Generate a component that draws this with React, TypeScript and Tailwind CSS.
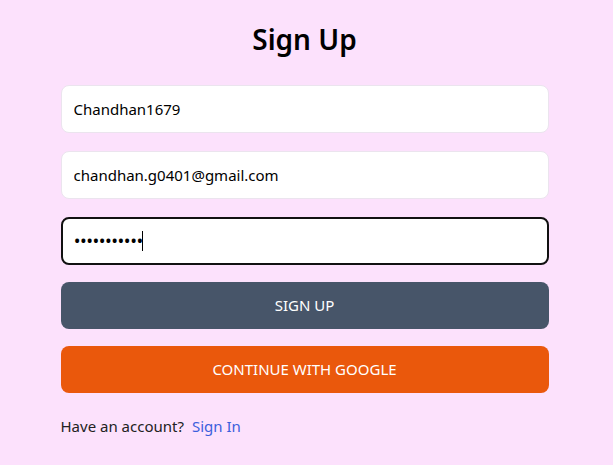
import React, { useState } from 'react';

export default function App() {
  const [form, setForm] = useState({
    username: 'Chandhan1679',
    email: 'chandhan.g0401@gmail.com',
    password: 'chandhan123',
  });

  function handleChange(e: React.ChangeEvent<HTMLInputElement>) {
    setForm({ ...form, [e.target.id]: e.target.value });
  }

  return (
    <div
      className="min-h-screen bg-[#fce1fc] text-black pr-1"
      style={{ fontFamily: '"Segoe UI", "Noto Sans", sans-serif' }}
    >
      <div className="max-w-lg mx-auto px-3 pt-[21px]">
        <h1 className="text-[28px] leading-9 text-center font-semibold mb-7">Sign Up</h1>

        <form className="flex flex-col" onSubmit={(e) => e.preventDefault()}>
          <input
            id="username"
            type="text"
            placeholder="username"
            value={form.username}
            onChange={handleChange}
            className="h-12 mb-[18px] bg-white border border-[#ebe4ee] rounded-lg px-3 text-[15px] outline-none"
          />
          <input
            id="email"
            type="email"
            placeholder="email"
            value={form.email}
            onChange={handleChange}
            className="h-12 mb-[18px] bg-white border border-[#ebe4ee] rounded-lg px-3 text-[15px] outline-none"
          />
          {/* focused password field */}
          <div className="h-12 mb-[17px] bg-white border-2 border-[#111] rounded-lg px-3 flex items-center">
            <span className="text-[14px] font-bold tracking-[1px] leading-none">{'•'.repeat(form.password.length)}</span>
            <span className="w-px h-5 bg-black -ml-px" />
          </div>

          <button
            type="submit"
            className="h-[47px] mb-[17px] bg-[#475569] text-white rounded-lg uppercase text-[15px] hover:opacity-95"
          >
            Sign up
          </button>
          <button
            type="button"
            className="h-[47px] bg-[#ea580c] text-white rounded-lg uppercase text-[15px] hover:opacity-95"
          >
            Continue with Google
          </button>
        </form>

        <div className="flex gap-2 mt-[22px] text-[15px]">
          <p className="text-[#222]">Have an account?</p>
          <span className="text-[#3b5fdc]">Sign In</span>
        </div>
      </div>
    </div>
  );
}
